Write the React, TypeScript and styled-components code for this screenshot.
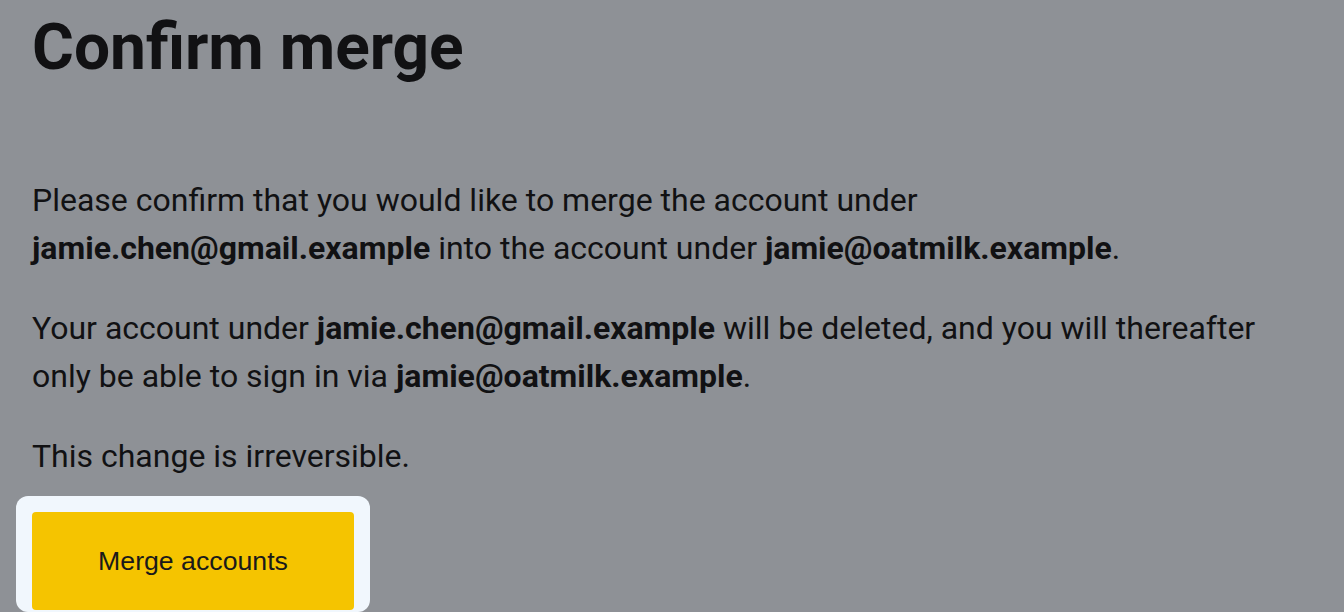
import React from "react";
import styled, { createGlobalStyle } from "styled-components";

const Global = createGlobalStyle`
  html, body {
    margin: 0;
    padding: 0;
    background: #8e9196;
    height: 612px;
    overflow: hidden;
  }
  * { box-sizing: border-box; }
`;

const Page = styled.main`
  padding: 8px 32px 0 32px;
  font-family: Roboto, "Liberation Sans", sans-serif;
  color: #111113;
`;

const Title = styled.h1`
  margin: 0 0 88px 0;
  font-size: 64px;
  line-height: 80px;
  font-weight: 700;
  letter-spacing: 0;
`;

const Paragraph = styled.p`
  margin: 0 0 32px 0;
  font-size: 32px;
  line-height: 48px;
  max-width: 1280px;
`;

const Strong = styled.strong`
  font-weight: 700;
`;

const FocusRing = styled.div`
  display: inline-block;
  margin-left: -16px;
  margin-top: -16px;
  padding: 16px 16px 2px 16px;
  background: #f1f7fd;
  border-radius: 12px;
`;

const Button = styled.button`
  display: block;
  width: 322px;
  height: 98px;
  border: none;
  border-radius: 4px;
  background: #f5c400;
  color: #1a1a1a;
  font-family: "Liberation Sans", Arial, sans-serif;
  font-size: 26.7px;
  cursor: pointer;
`;

export default function App() {
  return (
    <>
      <Global />
      <Page>
        <Title>Confirm merge</Title>
        <Paragraph>
          Please confirm that you would like to merge the account under{" "}
          <Strong>jamie.chen@gmail.example</Strong> into the account under{" "}
          <Strong>jamie@oatmilk.example</Strong>.
        </Paragraph>
        <Paragraph>
          Your account under <Strong>jamie.chen@gmail.example</Strong> will be
          deleted, and you will thereafter only be able to sign in via{" "}
          <Strong>jamie@oatmilk.example</Strong>.
        </Paragraph>
        <Paragraph>This change is irreversible.</Paragraph>
        <FocusRing>
          <Button>Merge accounts</Button>
        </FocusRing>
      </Page>
    </>
  );
}
